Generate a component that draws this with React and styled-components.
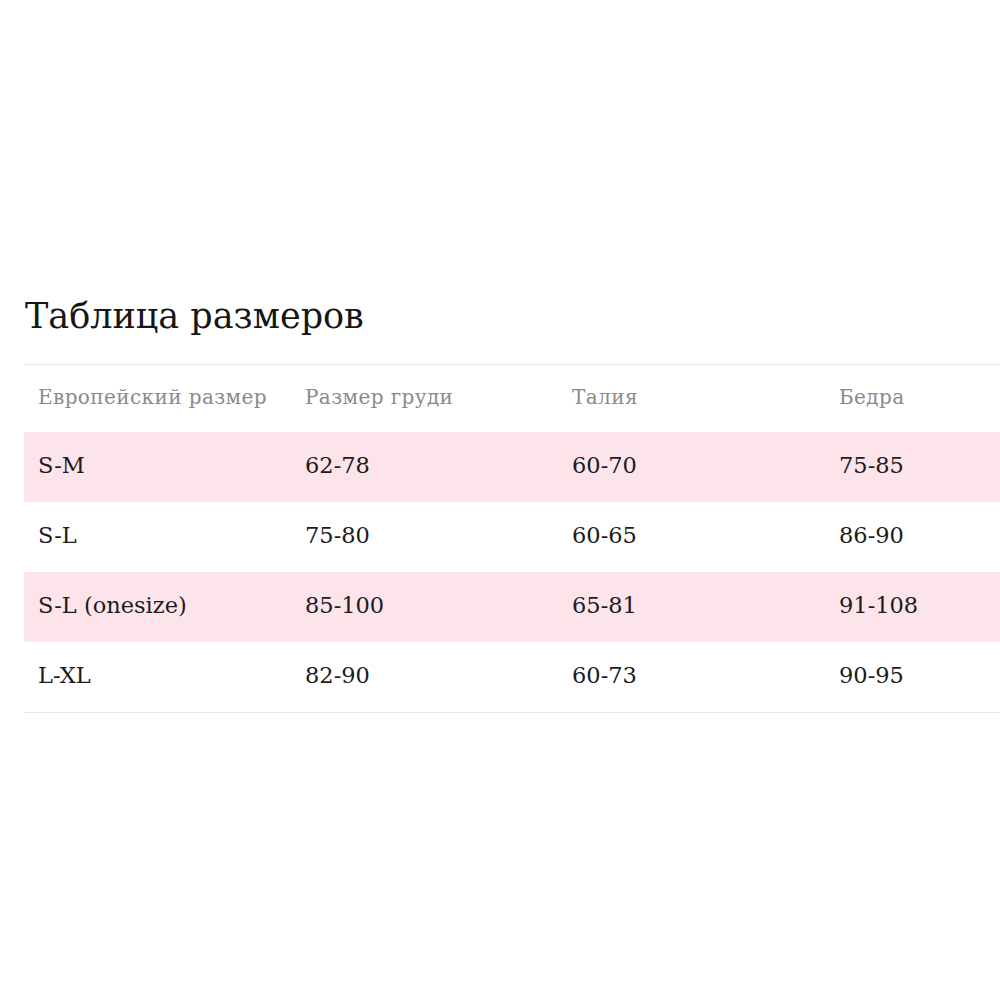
import React from "react";
import styled, { createGlobalStyle } from "styled-components";

const GlobalStyle = createGlobalStyle`
  html, body {
    margin: 0;
    padding: 0;
    background: #fff;
  }
  body {
    font-family: "DejaVu Serif", "Liberation Serif", serif;
  }
`;

const headers = ["Европейский размер", "Размер груди", "Талия", "Бедра"];

const rows = [
  ["S-M", "62-78", "60-70", "75-85"],
  ["S-L", "75-80", "60-65", "86-90"],
  ["S-L (onesize)", "85-100", "65-81", "91-108"],
  ["L-XL", "82-90", "60-73", "90-95"],
];

const App = () => {
  return (
    <>
      <GlobalStyle />
      <Page>
        <Title>Таблица размеров</Title>
        <Table>
          <HeadRow>
            {headers.map((h) => (
              <HeadCell key={h}>{h}</HeadCell>
            ))}
          </HeadRow>
          {rows.map((r, i) => (
            <Row key={i} striped={i % 2 === 0}>
              {r.map((c, j) => (
                <Cell key={j}>{c}</Cell>
              ))}
            </Row>
          ))}
        </Table>
      </Page>
    </>
  );
};

export default App;

const Page = styled.div`
  width: 1000px;
  height: 1000px;
  padding: 290px 0 0 24px;
  box-sizing: border-box;
`;

const Title = styled.h2`
  margin: 0 0 0 1px;
  font-weight: normal;
  font-size: 35px;
  line-height: 52px;
  color: #161616;
  height: 74px;
`;

const Table = styled.div`
  width: 976px;
  border-top: 1px solid #e6e6e6;
  border-bottom: 1px solid #e6e6e6;
`;

const HeadRow = styled.div`
  display: grid;
  grid-template-columns: repeat(3, 267px) 1fr;
  height: 67px;
  align-items: center;
`;

const HeadCell = styled.div`
  padding: 0 0 4px 14px;
  font-size: 20px;
  letter-spacing: 0.4px;
  color: #8a8a8a;
  white-space: nowrap;
`;

const Row = styled.div`
  display: grid;
  grid-template-columns: repeat(3, 267px) 1fr;
  height: 70px;
  align-items: center;
  background: ${(p) => (p.striped ? "#fde4ea" : "#fff")};
`;

const Cell = styled.div`
  padding: 0 0 5px 14px;
  font-size: 22.5px;
  color: #1c1c1c;
  white-space: nowrap;
`;
